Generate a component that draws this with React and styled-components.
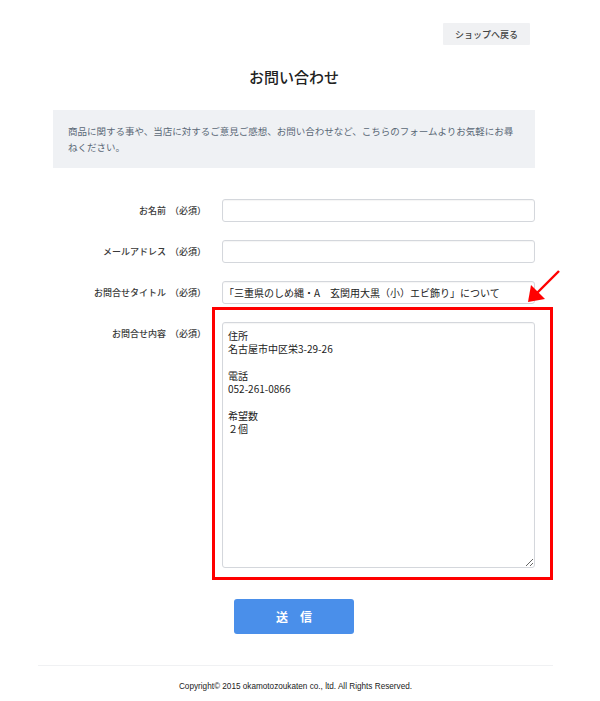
import React from "react";
import styled, { createGlobalStyle } from "styled-components";

const GlobalStyle = createGlobalStyle`
  html, body { margin: 0; padding: 0; background: #fff; }
  body {
    font-family: "Noto Sans CJK JP", "Noto Sans", sans-serif;
    color: #333;
  }
  * { box-sizing: border-box; }
`;

const Page = styled.div`
  width: 515px;
  margin-left: 38px;
  position: relative;
`;

const Inner = styled.div`
  padding: 0 18px 0 15px;
`;

const Header = styled.div`
  display: flex;
  justify-content: flex-end;
  padding: 23px 23px 0 0;
`;

const ShopButton = styled.a`
  display: flex;
  align-items: center;
  justify-content: center;
  width: 87px;
  height: 22px;
  background: #f0f1f3;
  color: #444;
  font-size: 9px;
  font-weight: 500;
  text-decoration: none;
  border-radius: 1px;
`;

const Title = styled.h1`
  margin: 22px 0 0;
  font-size: 15px;
  line-height: 20px;
  font-weight: 500;
  text-align: center;
  color: #222;
`;

const InfoBox = styled.div`
  margin-top: 23px;
  background: #eff1f4;
  padding: 13px 15px;
  font-size: 9.5px;
  line-height: 16px;
  color: #5a6876;
`;

const Form = styled.form`
  margin-top: 31px;
  display: flex;
  flex-direction: column;
  gap: 18px;
`;

const Row = styled.div`
  display: grid;
  grid-template-columns: 153px 313px;
  column-gap: 16px;
  align-items: ${(p) => (p.$top ? "start" : "center")};
`;

const Label = styled.label`
  text-align: right;
  font-size: 9px;
  font-weight: 500;
  color: #3a3a3a;
  white-space: nowrap;
  padding-top: ${(p) => (p.$top ? "5px" : "0")};
`;

const Required = styled.span`
  margin-left: 2px;
`;

const Field = styled.div`
  position: relative;
`;

const Input = styled.input`
  display: block;
  width: 100%;
  height: 23px;
  border: 1px solid #d4d7dc;
  border-radius: 3px;
  box-shadow: inset 0 1px 1px rgba(0, 0, 0, 0.04);
  padding: 0 6px 0 1px;
  font-family: "Noto Sans CJK JP", sans-serif;
  font-size: 10px;
  color: #222;
  background: #fff;
  outline: none;
`;

const TextArea = styled.textarea`
  display: block;
  width: 100%;
  height: 246px;
  border: 1px solid #d4d7dc;
  border-radius: 3px;
  box-shadow: inset 0 1px 1px rgba(0, 0, 0, 0.04);
  padding: 6px 5px;
  font-family: "Noto Sans CJK JP", sans-serif;
  font-size: 10px;
  line-height: 13.3px;
  color: #222;
  background: #fff;
  outline: none;
`;

const Highlight = styled.div`
  position: absolute;
  left: -10px;
  top: -15px;
  width: 341px;
  height: 273px;
  border: 3px solid #ff0000;
  pointer-events: none;
`;

const Arrow = styled.svg`
  position: absolute;
  left: 303px;
  top: -52px;
  width: 36px;
  height: 36px;
  pointer-events: none;
`;

const Actions = styled.div`
  display: flex;
  justify-content: center;
  margin-top: 31px;
`;

const Submit = styled.button`
  width: 120px;
  height: 35px;
  border: none;
  border-radius: 3px;
  background: #4a8fea;
  color: #fff;
  font-family: "Noto Sans CJK JP", sans-serif;
  font-size: 12px;
  font-weight: 700;
  cursor: pointer;
`;

const Footer = styled.footer`
  margin-top: 31px;
  border-top: 1px solid #f0f1f3;
  padding: 15px 0 8px;
  text-align: center;
  font-family: "Liberation Sans", Arial, sans-serif;
  font-size: 8.2px;
  line-height: 12px;
  color: #222;
`;

const message =
  "住所\n名古屋市中区栄3-29-26\n\n電話\n052-261-0866\n\n希望数\n２個";

const fields = [
  { label: "お名前", type: "text" },
  { label: "メールアドレス", type: "email" },
  {
    label: "お問合せタイトル",
    type: "text",
    value: "「三重県のしめ縄・A　玄関用大黒（小）エビ飾り」について",
  },
];

export default function App() {
  return (
    <>
      <GlobalStyle />
      <Page>
        <Header>
          <ShopButton href="#">ショップへ戻る</ShopButton>
        </Header>
        <Inner>
          <Title>お問い合わせ</Title>
          <InfoBox>
            商品に関する事や、当店に対するご意見ご感想、お問い合わせなど、こちらのフォームよりお気軽にお尋ねください。
          </InfoBox>
          <Form onSubmit={(e) => e.preventDefault()}>
            {fields.map((f) => (
              <Row key={f.label}>
                <Label>
                  {f.label} <Required>（必須）</Required>
                </Label>
                <Field>
                  <Input type={f.type} defaultValue={f.value} />
                </Field>
              </Row>
            ))}
            <Row $top>
              <Label $top>
                お問合せ内容 <Required>（必須）</Required>
              </Label>
              <Field>
                <TextArea defaultValue={message} />
                <Highlight />
                <Arrow viewBox="0 0 36 36">
                  <line x1="34" y1="1" x2="12" y2="23" stroke="#ff0000" strokeWidth="2.4" />
                  <polygon points="3,32 6,15 20,29" fill="#ff0000" />
                </Arrow>
              </Field>
            </Row>
          </Form>
          <Actions>
            <Submit type="submit">送　信</Submit>
          </Actions>
        </Inner>
        <Footer>Copyright© 2015 okamotozoukaten co., ltd. All Rights Reserved.</Footer>
      </Page>
    </>
  );
}
